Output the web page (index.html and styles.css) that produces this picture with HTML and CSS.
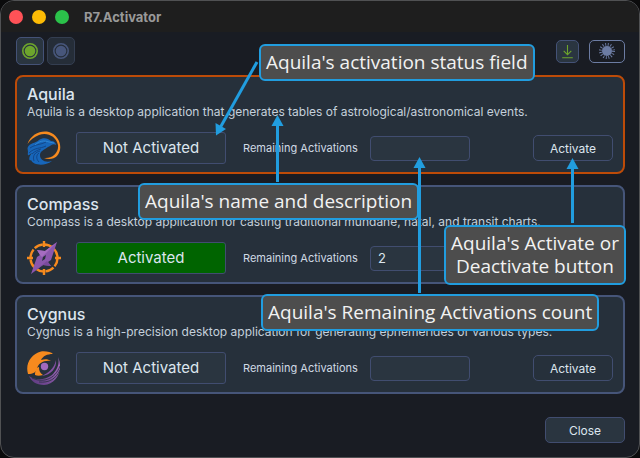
FILE: index.html
```html
<!DOCTYPE html>
<html lang="en">
<head>
<meta charset="utf-8">
<title>R7.Activator</title>
<link rel="stylesheet" href="styles.css">
</head>
<body>
<div class="window">
  <header class="titlebar">
    <span class="dot dot-red"></span>
    <span class="dot dot-yellow"></span>
    <span class="dot dot-green"></span>
    <h1 class="window-title">R7.Activator</h1>
  </header>

  <div class="toolbar">
    <button class="tool tool-on" type="button" aria-label="Online">
      <svg width="18" height="18" viewBox="0 0 18 18"><circle cx="9" cy="9" r="7.2" fill="none" stroke="#6da52c" stroke-width="1.6"/><circle cx="9" cy="9" r="5.3" fill="#6da52c"/></svg>
    </button>
    <button class="tool tool-off" type="button" aria-label="Offline">
      <svg width="18" height="18" viewBox="0 0 18 18"><circle cx="9" cy="9" r="7.2" fill="none" stroke="#47567b" stroke-width="1.6"/><circle cx="9" cy="9" r="5.3" fill="#47567b"/></svg>
    </button>
    <span class="spacer"></span>
    <button class="tool-small" type="button" aria-label="Download">
      <svg width="13" height="15" viewBox="0 0 13 15" fill="none" stroke="#6da52c" stroke-width="1.1"><path d="M6.500 1V10.500M2.700 6.800L6.500 10.600L10.300 6.800M1.200 13.700H11.800"/></svg>
    </button>
    <button class="tool-theme" type="button" aria-label="Theme">
      <svg width="18" height="18" viewBox="0 0 18 18"><circle cx="9" cy="9" r="5" fill="#6c7ca3"/><circle cx="9" cy="9" r="6.500" fill="none" stroke="#6c7ca3" stroke-width="3" stroke-dasharray="0.9 1.653"/></svg>
    </button>
  </div>

  <main class="cards">
    <section class="card card-selected">
      <h2 class="name">Aquila</h2>
      <p class="description">Aquila is a desktop application that generates tables of astrological/astronomical events.</p>
      <div class="row">
        <svg class="logo" width="34" height="34" viewBox="0 0 34 34">
          <path d="M0.500 13C4 3 14-1 22 1C32 4 37 17 30 25C27 28 22 29 17 27C25 28 32 22 31 14C29 5 20 1 12 4C7 6 3 9 0.500 13Z" fill="#f68a1e"/>
          <path d="M0.500 17C3 11 8 13 12 9C16 6 21 7 24 10C27 10 29 12 29 14C26 12 24 15 21 16C17 19 13 20 13 24C13 29 18 32 25 30C17 36 6 34 4 29C2 31 1 26 5 22C3 23 0 27 1 21Z" fill="#1766ba"/>
          <path d="M3 17C9 13 13 14 19 11M2 22C8 16 13 18 19 15M5 23C8 20 11 19 14 18M7 30C5 24 9 21 13 20M12 31C9 28 9 24 12 22" fill="none" stroke="#123f7c" stroke-width="0.8"/>
          <path d="M8 14C12 10 17 9 22 11L27 12" fill="none" stroke="#3994dd" stroke-width="0.7"/>
        </svg>
        <output class="status">Not Activated</output>
        <label class="label" for="aquila-count">Remaining Activations</label>
        <input class="count" id="aquila-count" type="text" readonly>
        <button class="button" type="button">Activate</button>
      </div>
    </section>

    <section class="card">
      <h2 class="name">Compass</h2>
      <p class="description">Compass is a desktop application for casting traditional mundane, natal, and transit charts.</p>
      <div class="row">
        <svg class="logo" width="34" height="34" viewBox="0 0 34 34">
          <circle cx="17" cy="17" r="13.500" fill="none" stroke="#f68a1e" stroke-width="2.400" stroke-dasharray="9 1.600"/>
          <path d="M17 0V6M17 28V34M0 17H6M28 17H34" stroke="#f68a1e" stroke-width="2.400"/>
          <path d="M30 1L24 19L21 21L24 25L16 24L4 33L10 16L13 14L10 9L18 10Z" fill="#8b57ad"/>
          <path d="M30 1L18 10L10 9L13 14L15 16Z" fill="#a56cc0"/>
          <path d="M4 33L16 24L24 25L20 20Z" fill="#7a4a9c"/>
          <path d="M19 14L18 18L15 20L16 16Z" fill="#26303b"/>
        </svg>
        <output class="status status-active">Activated</output>
        <label class="label" for="compass-count">Remaining Activations</label>
        <input class="count" id="compass-count" type="text" value="2" readonly>
        <span class="button-slot"></span>
      </div>
    </section>

    <section class="card">
      <h2 class="name">Cygnus</h2>
      <p class="description">Cygnus is a high-precision desktop application for generating ephemerides of various types.</p>
      <div class="row">
        <svg class="logo" width="34" height="34" viewBox="0 0 34 34">
          <defs><linearGradient id="violet" x1="0" y1="1" x2="1" y2="0"><stop offset="0" stop-color="#57377b"/><stop offset="1" stop-color="#ad70c5"/></linearGradient></defs>
          <path d="M1 23C-2 13 4 3 14 0.500C19 0 24 1 26 3C20 3 16 5 14 9C18 8 21 8 24 10C17 9 11 12 10 18C9 21 6 23 1 23Z" fill="#f68a1e"/>
          <path d="M8 24C8 19 10 16 12 16C12 20 13 22 16 24C13 25 10 25 8 24Z" fill="#f68a1e"/>
          <circle cx="17.500" cy="15.500" r="3.700" fill="#a269bd"/>
          <path d="M31 6C37 20 29 33 17 34C9 34 4 30 2 25C9 30 18 29 25 24C30 19 33 13 31 6Z" fill="url(#violet)"/>
          <path d="M5 27C15 32 28 29 33 15M12 31C22 32 29 28 33 19" fill="none" stroke="#26303b" stroke-width="0.8"/>
          <path d="M29 9C30 17 24 24 15 25C21 22 27 18 29 9Z" fill="#8351a4"/>
        </svg>
        <output class="status">Not Activated</output>
        <label class="label" for="cygnus-count">Remaining Activations</label>
        <input class="count" id="cygnus-count" type="text" readonly>
        <button class="button" type="button">Activate</button>
      </div>
    </section>
  </main>

  <footer class="footer">
    <button class="button button-close" type="button">Close</button>
  </footer>
</div>

<div class="annotations">
  <svg class="arrows" width="640" height="458" viewBox="0 0 640 458">
    <g stroke="#219ddf" stroke-width="3" fill="none">
      <path d="M257 62L220 128"/>
      <path d="M277.500 182V124"/>
      <path d="M419.500 293V166"/>
      <path d="M572.500 223V168"/>
    </g>
    <g fill="#219ddf">
      <path d="M216 135.500L215.500 123L226 129Z"/>
      <path d="M277.500 115L283.500 126H271.500Z"/>
      <path d="M419.500 157L425.500 168H413.500Z"/>
      <path d="M572.500 158L578.500 169H566.500Z"/>
    </g>
  </svg>
  <div class="callout callout-status">Aquila's activation status field</div>
  <div class="callout callout-name">Aquila's name and description</div>
  <div class="callout callout-button">Aquila's Activate or<br>Deactivate button</div>
  <div class="callout callout-count">Aquila's Remaining Activations count</div>
</div>
</body>
</html>
```
FILE: styles.css
```css
* {
  box-sizing: border-box;
}

body {
  position: relative;
  margin: 0;
  background: #0b0b0c;
  color: #dce5ee;
  font-family: Inter, "Liberation Sans", sans-serif;
}

h1,
h2,
p {
  margin: 0;
}

button,
input {
  font-family: inherit;
  color: inherit;
}

.window {
  min-height: 100vh;
  background: #191c23;
  border: 1px solid #505153;
  border-radius: 14px;
  overflow: hidden;
}

.titlebar {
  display: flex;
  align-items: center;
  gap: 9px;
  height: 31px;
  padding: 0 8px;
  background: #1e1e1e;
}

.dot {
  width: 14px;
  height: 14px;
  border-radius: 50%;
}

.dot-red {
  background: #ff5257;
}

.dot-yellow {
  background: #fdbc05;
}

.dot-green {
  background: #2bc24a;
}

.window-title {
  padding-left: 6px;
  color: #999;
  font-size: 13px;
  font-weight: 700;
  line-height: 16px;
}

.toolbar {
  display: flex;
  align-items: center;
  gap: 3px;
  padding: 5px 14px 0 15px;
}

.spacer {
  flex: 1;
}

.tool,
.tool-small,
.tool-theme {
  display: flex;
  align-items: center;
  justify-content: center;
  padding: 0;
  border: 1px solid #445277;
  border-radius: 5px;
  background: #2a3540;
}

.tool {
  width: 28px;
  height: 28px;
}

.tool-off {
  border-color: #343e51;
  background: #252d38;
}

.tool-small {
  width: 23px;
  height: 23px;
  margin-right: 7px;
}

.tool-theme {
  width: 36px;
  height: 23px;
  border-color: #6c7ca3;
  background: #191c23;
}

.cards {
  display: grid;
  gap: 11px;
  padding: 10px 14px 0;
}

.card {
  padding: 8px 10px 7px;
  border: 2px solid #465579;
  border-radius: 8px;
  background: #26303b;
}

.card-selected {
  border-color: #bd4b08;
}

.name {
  font-size: 16px;
  font-weight: 500;
  line-height: 18px;
}

.description {
  color: #c5d0dc;
  font-size: 12px;
  line-height: 18px;
}

.row {
  display: flex;
  align-items: center;
  margin-top: 10px;
}

.logo {
  flex: none;
  margin-right: 15px;
}

.status {
  width: 150px;
  height: 32px;
  margin-right: 17px;
  border: 1px solid #414d70;
  border-radius: 3px;
  background: #2a3540;
  font-size: 15px;
  line-height: 30px;
  text-align: center;
}

.status-active {
  background: #006400;
}

.label {
  width: 127px;
  color: #d0dae4;
  font-size: 11px;
  white-space: nowrap;
}

.count {
  width: 100px;
  height: 25px;
  padding: 0 7px;
  border: 1px solid #414d70;
  border-radius: 4px;
  background: #2a3540;
  font-size: 13px;
}

.button,
.button-slot {
  width: 80px;
  height: 26px;
  margin-left: auto;
}

.button {
  padding: 0;
  border: 1px solid #414d70;
  border-radius: 5px;
  background: #26303b;
  font-size: 12px;
}

.footer {
  display: flex;
  padding: 23px 14px 14px;
}

.button-close {
  background: #2a3540;
}

.annotations {
  position: absolute;
  top: 0;
  left: 0;
}

.arrows {
  display: block;
}

.callout {
  position: absolute;
  padding: 5px;
  border: 2px solid #219ddf;
  border-radius: 6px;
  background: #4d4d4d;
  color: #f2f2f2;
  font-family: "Open Sans", sans-serif;
  font-size: 19px;
  line-height: 23px;
  text-align: center;
  white-space: nowrap;
}

.callout-status {
  top: 44px;
  left: 259px;
}

.callout-name {
  top: 183px;
  left: 138px;
}

.callout-button {
  top: 225px;
  left: 444px;
}

.callout-count {
  top: 294px;
  left: 261px;
}
```
